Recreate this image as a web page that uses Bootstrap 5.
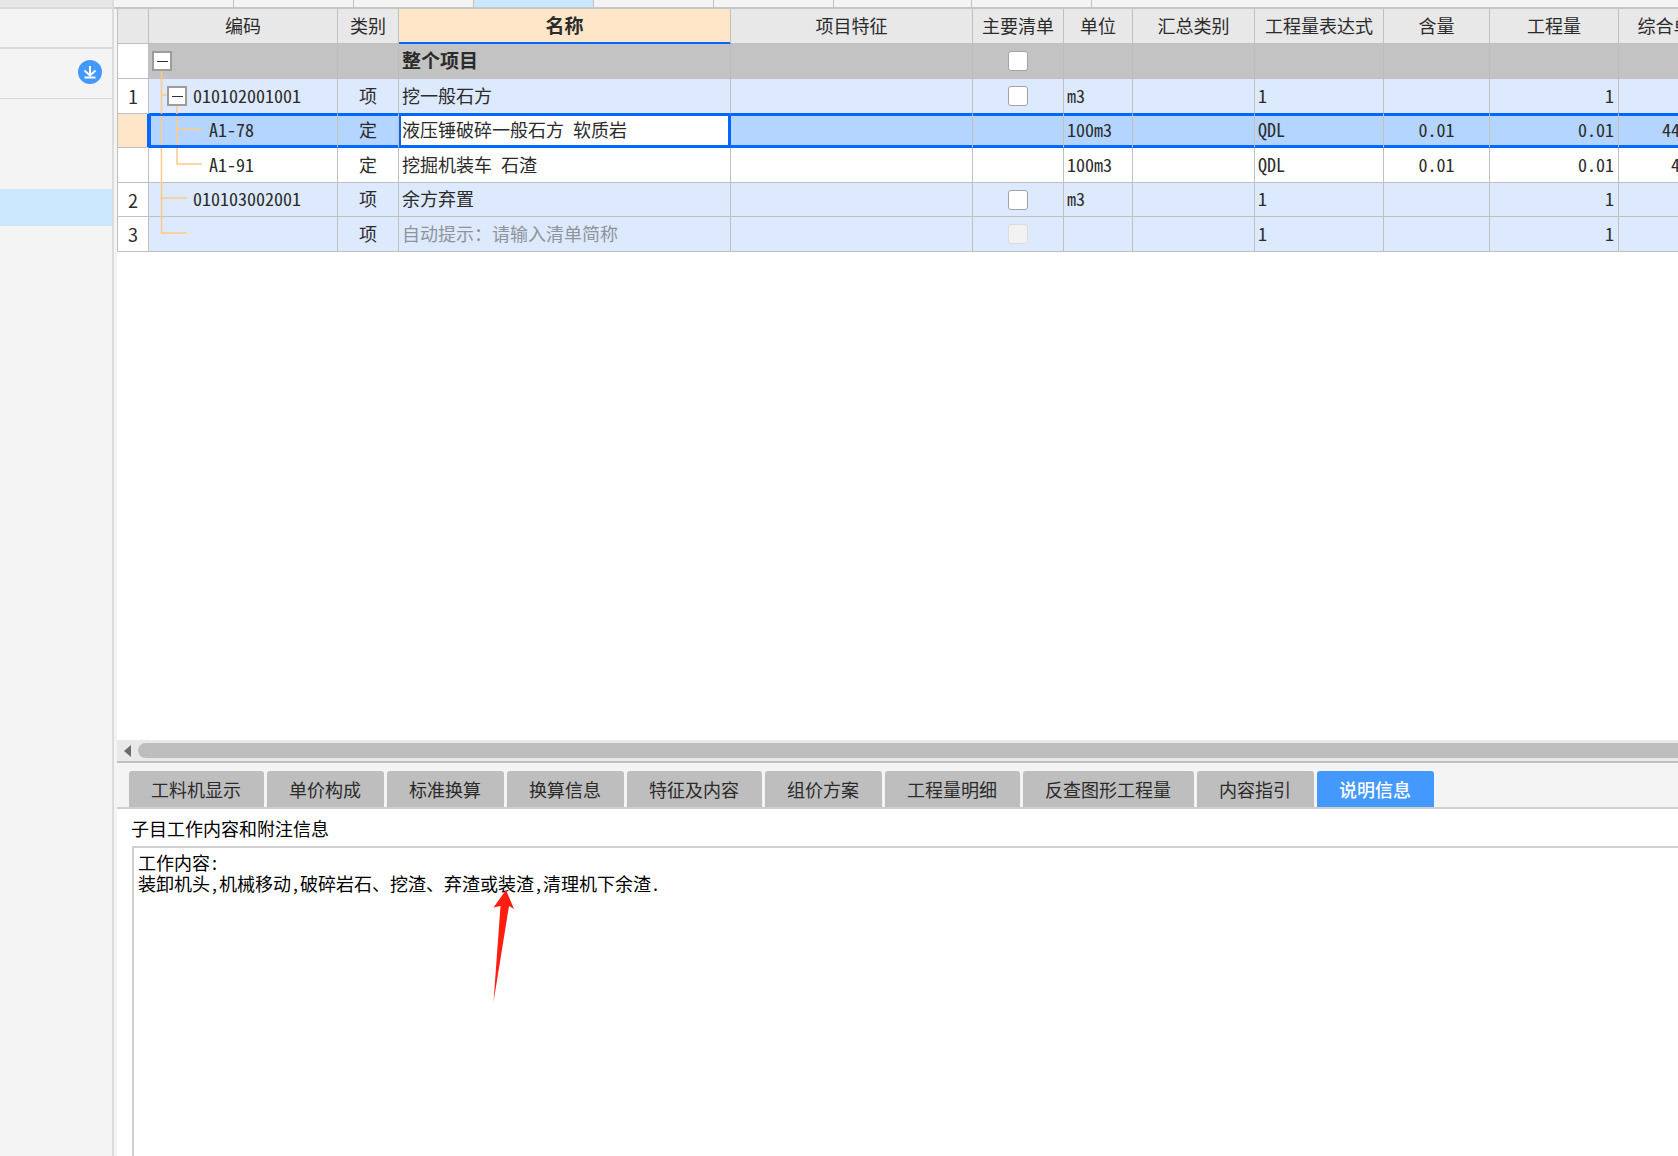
<!DOCTYPE html>
<html lang="zh-CN">
<head>
<meta charset="utf-8">
<meta name="viewport" content="width=device-width, initial-scale=1">
<title>分部分项</title>
<link href="https://cdn.jsdelivr.net/npm/bootstrap@5.3.0/dist/css/bootstrap.min.css" rel="stylesheet">
<style>
  :root { --line: #c0c0c0; --soft: #dcdcdc; --panel: #f4f4f4; --accent: #0068ff; --peach: #ffe6c8; }
  body { font-family: "Noto Sans CJK SC", sans-serif; font-size: 18px; line-height: 22px; color: #2b2b2b; background: #fff; font-feature-settings: "hwid" 1; }
  .side { flex: 0 0 114px; background: var(--panel); border-right: 2px solid var(--soft); }
  .side-top { height: 9px; background: #e7e7e7; border-bottom: 2px solid var(--soft); }
  .side-bar { height: 40px; border-bottom: 2px solid var(--soft); }
  .side-tools { height: 50px; border-bottom: 1px solid var(--soft); padding: 0 10px 4px 0; }
  .side-pick { height: 37px; margin-top: 90px; background: #cce8ff; }
  .strip { height: 9px; background: var(--panel); border-bottom: 2px solid #c6c6c6; }
  .strip span { width: 120px; border-right: 1px solid var(--line); }
  .strip .wide { width: 138px; }
  .strip .on { background: #cce8ff; }
  .work { border-left: 3px solid var(--panel); }

  .grid { table-layout: fixed; width: 1612px; border-collapse: separate; border-spacing: 0; border-left: 1px solid var(--line); }
  .grid th, .grid td { height: 35px; padding: 0 3px 3px; border-right: 1px solid var(--line); border-bottom: 1px solid var(--line); white-space: nowrap; overflow: hidden; vertical-align: middle; }
  .grid th { background: #e8e8e8; font-weight: 400; text-align: center; }
  .grid .short td { height: 34px; }
  .grid thead .hot { background: var(--peach); font-size: 19px; font-weight: 700; border-bottom-color: var(--accent); box-shadow: inset 0 -1px var(--accent); }
  .grid .bill td { background: #dde9fd; }
  .grid .total td { background: #c3c3c3; border-right-color: #bdbdbd; font-size: 19px; font-weight: 700; }
  .grid .over td:not(.num) { border-bottom-color: var(--accent); }
  .grid .picked td { background: #b3d5ff; border-bottom-color: var(--accent); box-shadow: inset 0 2px var(--accent), inset 0 -2px var(--accent); }
  .grid td.num { background: #fff; text-align: center; padding: 0; font-feature-settings: normal; border-right-color: var(--line); }
  .grid .picked td.num { background: var(--peach); box-shadow: inset -1px 0 var(--accent); border-right-color: var(--accent); border-bottom-color: var(--line); }
  .grid .picked td.code { box-shadow: inset 2px 0 var(--accent), inset 0 2px var(--accent), inset 0 -2px var(--accent); }
  .grid .picked td.editing { background: #fff; border-right-color: var(--accent); box-shadow: inset 2px 0 var(--accent), inset -2px 0 var(--accent), inset 0 2px var(--accent), inset 0 -2px var(--accent); }
  .grid td.code { padding: 0; overflow: visible; }
  .grid td.tick { padding: 0; }
  .grid td.fig { padding-right: 4px; text-align: right; }
  .grid td.price { padding-right: 48px; text-align: right; }
  .hint { color: #8f949c; }
  .cell-input { width: 100%; padding: 0; border: 0; outline: 0; background: transparent; color: inherit; font: inherit; font-feature-settings: inherit; display: block; }

  .branch { position: relative; height: 33px; display: flex; align-items: center; gap: 6px; }
  .branch span { padding-bottom: 3px; }
  .branch svg.guide { position: absolute; left: 0; top: -1px; width: 60px; height: 35px; overflow: visible; fill: none; stroke: #ffca85; stroke-width: 1.5; }
  .lvl-0 { padding-left: 3px; } .lvl-1 { padding-left: 18px; } .lvl-leaf { padding-left: 44px; } .lvl-sub { padding-left: 60px; }
  .fold { position: relative; width: 20px; height: 20px; padding: 0; border: 2px solid #9c9c9c; background: #fff; display: flex; align-items: center; justify-content: center; }
  .fold::before { content: ""; width: 11px; height: 1px; background: #333; }
  .grid .form-check-input { float: none; display: block; width: 20px; height: 20px; margin: 0 auto; border: 1px solid #a3a3a3; border-radius: 3px; background-color: #fff; }
  .grid .form-check-input:disabled { opacity: 1; background-color: #f2f2f2; border-color: #dcdcdc; }

  .lower { flex: 0 0 416px; }
  .hbar { height: 21px; background: #e9e9e9; padding: 3px 0 3px 7px; }
  .hbar button { width: 9px; padding: 0; border: 0; background: none; }
  .hbar svg { display: block; }
  .thumb { margin-left: 5px; background: #bebebe; border-radius: 8px 0 0 8px; }
  .tabs { height: 48px; background: var(--panel); border-top: 2px solid var(--line); border-bottom: 2px solid #cfcfcf; padding: 8px 0 0 12px; gap: 3px; flex-wrap: nowrap; }
  .tabs .nav-link { padding: 0 23px 0 22px; border: 0; border-radius: 3px 3px 0 0; background: #bebebe; color: #2b2b2b; white-space: nowrap; }
  .tabs .nav-link.active { background: #4499ff; color: #fff; font-weight: 500; }
  .note-label { height: 37px; padding: 8px 0 0 14px; color: #000; }
  .note { position: relative; margin-left: 15px; }
  .note textarea { border: 2px solid #d0d0d0; border-width: 2px 0 0 2px; border-radius: 0; padding: 4px; resize: none; outline: 0; font: inherit; line-height: 21px; font-feature-settings: inherit; color: #000; background: #fff; }
  .pointer { position: absolute; left: 361px; top: 44px; }
</style>
</head>
<body>
<div class="d-flex vh-100 overflow-hidden">
  <aside class="side">
    <div class="side-top"></div>
    <div class="side-bar"></div>
    <div class="side-tools d-flex align-items-center justify-content-end">
      <button class="btn p-0 border-0 lh-1" type="button" aria-label="下载">
        <svg class="d-block" width="24" height="24" viewBox="0 0 24 24"><circle cx="12" cy="12" r="12" fill="#4499ff"/><path d="M12 6v10M6.500 10.500l5.500 5 5.500-5M6.500 17.500h11" fill="none" stroke="#fff" stroke-width="2"/></svg>
      </button>
    </div>
    <div class="side-pick"></div>
  </aside>

  <main class="d-flex flex-column flex-grow-1 overflow-hidden">
    <div class="strip d-flex flex-shrink-0">
      <span></span><span></span><span></span><span class="on"></span><span></span><span></span><span class="wide"></span><span></span>
    </div>
    <div class="work flex-grow-1 overflow-hidden">
      <table class="grid">
        <colgroup>
          <col style="width:31px"><col style="width:189px"><col style="width:61px"><col style="width:332px"><col style="width:242px"><col style="width:91px"><col style="width:69px"><col style="width:122px"><col style="width:129px"><col style="width:106px"><col style="width:129px"><col style="width:110px">
        </colgroup>
        <thead>
          <tr><th></th><th>编码</th><th>类别</th><th class="hot">名称</th><th>项目特征</th><th>主要清单</th><th>单位</th><th>汇总类别</th><th>工程量表达式</th><th>含量</th><th>工程量</th><th>综合单价</th></tr>
        </thead>
        <tbody>
          <tr class="total">
            <td class="num"></td>
            <td class="code"><div class="branch lvl-0"><svg class="guide"><path d="M12.500 26V35"/></svg><button class="fold" type="button" aria-label="折叠"></button></div></td>
            <td></td><td>整个项目</td><td></td>
            <td class="tick"><input class="form-check-input" type="checkbox" aria-label="主要清单"></td>
            <td></td><td></td><td></td><td></td><td></td><td></td>
          </tr>
          <tr class="bill over">
            <td class="num">1</td>
            <td class="code"><div class="branch lvl-1"><svg class="guide"><path d="M12.500 0V35M12.500 16H19M28 26V35"/></svg><button class="fold" type="button" aria-label="折叠"></button><span>010102001001</span></div></td>
            <td class="text-center">项</td><td>挖一般石方</td><td></td>
            <td class="tick"><input class="form-check-input" type="checkbox" aria-label="主要清单"></td>
            <td>m3</td><td></td><td>1</td><td></td><td class="fig">1</td><td></td>
          </tr>
          <tr class="picked short">
            <td class="num"></td>
            <td class="code"><div class="branch lvl-sub"><svg class="guide"><path d="M12.500 3V32M28 3V32M28 16H53"/></svg><span>A1-78</span></div></td>
            <td class="text-center">定</td>
            <td class="editing"><input class="cell-input" type="text" aria-label="名称" value="液压锤破碎一般石方 软质岩"></td><td></td><td></td>
            <td>100m3</td><td></td><td>QDL</td><td class="text-center">0.01</td><td class="fig">0.01</td><td class="price">44</td>
          </tr>
          <tr>
            <td class="num"></td>
            <td class="code"><div class="branch lvl-sub"><svg class="guide"><path d="M12.500 0V35M28 0V16H53"/></svg><span>A1-91</span></div></td>
            <td class="text-center">定</td><td>挖掘机装车 石渣</td><td></td><td></td>
            <td>100m3</td><td></td><td>QDL</td><td class="text-center">0.01</td><td class="fig">0.01</td><td class="price">4</td>
          </tr>
          <tr class="bill short">
            <td class="num">2</td>
            <td class="code"><div class="branch lvl-leaf"><svg class="guide"><path d="M12.500 0V35M12.500 16H38"/></svg><span>010103002001</span></div></td>
            <td class="text-center">项</td><td>余方弃置</td><td></td>
            <td class="tick"><input class="form-check-input" type="checkbox" aria-label="主要清单"></td>
            <td>m3</td><td></td><td>1</td><td></td><td class="fig">1</td><td></td>
          </tr>
          <tr class="bill">
            <td class="num">3</td>
            <td class="code"><div class="branch"><svg class="guide"><path d="M12.500 0V16H38"/></svg></div></td>
            <td class="text-center">项</td><td class="hint">自动提示：请输入清单简称</td><td></td>
            <td class="tick"><input class="form-check-input" type="checkbox" aria-label="主要清单" disabled></td>
            <td></td><td></td><td>1</td><td></td><td class="fig">1</td><td></td>
          </tr>
        </tbody>
      </table>
    </div>

    <section class="lower d-flex flex-column work">
      <div class="hbar d-flex flex-shrink-0">
        <button type="button" aria-label="向左滚动"><svg width="8" height="14" viewBox="0 0 8 14"><path d="M7 1v12L0 7z" fill="#6b6b70"/></svg></button>
        <div class="thumb flex-grow-1"></div>
      </div>
      <div class="tabs nav flex-shrink-0" role="tablist">
        <button class="nav-link" type="button" role="tab">工料机显示</button>
        <button class="nav-link" type="button" role="tab">单价构成</button>
        <button class="nav-link" type="button" role="tab">标准换算</button>
        <button class="nav-link" type="button" role="tab">换算信息</button>
        <button class="nav-link" type="button" role="tab">特征及内容</button>
        <button class="nav-link" type="button" role="tab">组价方案</button>
        <button class="nav-link" type="button" role="tab">工程量明细</button>
        <button class="nav-link" type="button" role="tab">反查图形工程量</button>
        <button class="nav-link" type="button" role="tab">内容指引</button>
        <button class="nav-link active" type="button" role="tab" aria-selected="true">说明信息</button>
      </div>
      <label class="note-label flex-shrink-0" for="note">子目工作内容和附注信息</label>
      <div class="note flex-grow-1">
        <textarea class="w-100 h-100 d-block" id="note" readonly>工作内容:
装卸机头,机械移动,破碎岩石、挖渣、弃渣或装渣,清理机下余渣.</textarea>
        <svg class="pointer" width="22" height="112" viewBox="0 0 22 112"><path d="M13 0L21 19 16 16 .500 112 7.500 16 .500 17.500z" fill="#ff1e10"/></svg>
      </div>
    </section>
  </main>
</div>
<script src="https://cdn.jsdelivr.net/npm/bootstrap@5.3.0/dist/js/bootstrap.bundle.min.js"></script>
</body>
</html>
